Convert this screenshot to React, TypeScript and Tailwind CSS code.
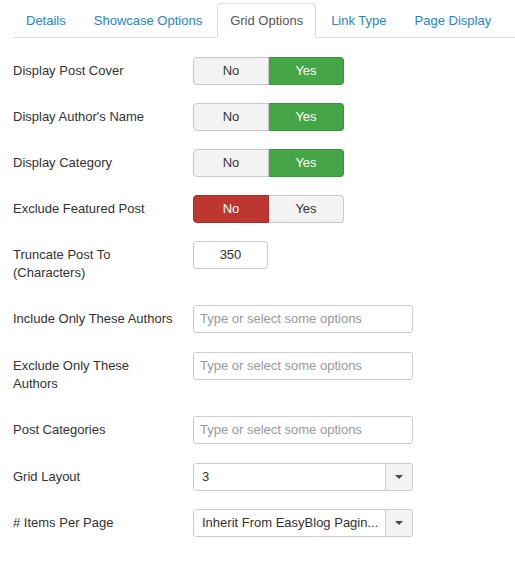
import React from 'react';

const tabs = ['Details', 'Showcase Options', 'Grid Options', 'Link Type', 'Page Display'];

const Row: React.FC<{ label: React.ReactNode; children: React.ReactNode; gap?: string }> = ({ label, children, gap = 'mb-[18px]' }) => (
  <div className={`flex ${gap}`}>
    <div className="w-[180px] shrink-0 py-[5px] pr-4 leading-[18px] text-[#333]">{label}</div>
    <div>{children}</div>
  </div>
);

const Toggle: React.FC<{ value: 'yes' | 'no' }> = ({ value }) => (
  <div className="flex h-[28px] w-[151px] text-[13px]">
    <div
      className={`flex-1 flex items-center justify-center rounded-l-[4px] border ${
        value === 'no' ? 'bg-[#bd362f] border-[#a52f29] text-white' : 'bg-[#f3f3f3] border-[#c8c8c8] text-[#333]'
      }`}
    >
      No
    </div>
    <div
      className={`flex-1 flex items-center justify-center rounded-r-[4px] border border-l-0 ${
        value === 'yes' ? 'bg-[#46a546] border-[#3d923d] text-white' : 'bg-[#f3f3f3] border-[#c8c8c8] text-[#333]'
      }`}
    >
      Yes
    </div>
  </div>
);

const TextBox: React.FC<{ placeholder: string }> = ({ placeholder }) => (
  <div className="h-[28px] w-[220px] border border-[#ccc] rounded-[3px] bg-white px-[6px] flex items-center text-[#999]">
    {placeholder}
  </div>
);

const Select: React.FC<{ value: string }> = ({ value }) => (
  <div className="h-[28px] w-[220px] border border-[#ccc] rounded-[3px] bg-white flex overflow-hidden">
    <div className="flex-1 min-w-0 px-[8px] flex items-center text-[#333] truncate">{value}</div>
    <div className="w-[27px] border-l border-[#ccc] bg-[#f3f3f3] flex items-center justify-center">
      <svg width="8" height="4" viewBox="0 0 8 4">
        <path d="M0 0h8L4 4z" fill="#444" />
      </svg>
    </div>
  </div>
);

export default function App() {
  return (
    <div className="w-[515px] h-[583px] bg-white pt-[3px] pl-[13px] text-[13px] font-['Liberation_Sans',Arial,sans-serif]">
      <div className="flex border-b border-[#ddd] h-[35px]">
        {tabs.map((t) => (
          <div
            key={t}
            className={`px-3 py-2 leading-[18px] mr-[2px] rounded-t-[4px] border ${
              t === 'Grid Options'
                ? 'border-[#ddd] border-b-white bg-white text-[#555] h-[35px]'
                : 'border-transparent text-[#2384d3]'
            }`}
          >
            {t}
          </div>
        ))}
      </div>

      <div className="pt-[19px]">
        <Row label="Display Post Cover">
          <Toggle value="yes" />
        </Row>
        <Row label="Display Author's Name">
          <Toggle value="yes" />
        </Row>
        <Row label="Display Category">
          <Toggle value="yes" />
        </Row>
        <Row label="Exclude Featured Post">
          <Toggle value="no" />
        </Row>
        <Row label={<>Truncate Post To<br />(Characters)</>}>
          <div className="h-[28px] w-[75px] border border-[#ccc] rounded-[3px] flex items-center justify-center text-[#333]">
            350
          </div>
        </Row>
        <Row label="Include Only These Authors" gap="mb-[19px]">
          <TextBox placeholder="Type or select some options" />
        </Row>
        <Row label={<>Exclude Only These<br />Authors</>}>
          <TextBox placeholder="Type or select some options" />
        </Row>
        <Row label="Post Categories" gap="mb-[19px]">
          <TextBox placeholder="Type or select some options" />
        </Row>
        <Row label="Grid Layout">
          <Select value="3" />
        </Row>
        <Row label="# Items Per Page">
          <Select value="Inherit From EasyBlog Pagin..." />
        </Row>
      </div>
    </div>
  );
}
